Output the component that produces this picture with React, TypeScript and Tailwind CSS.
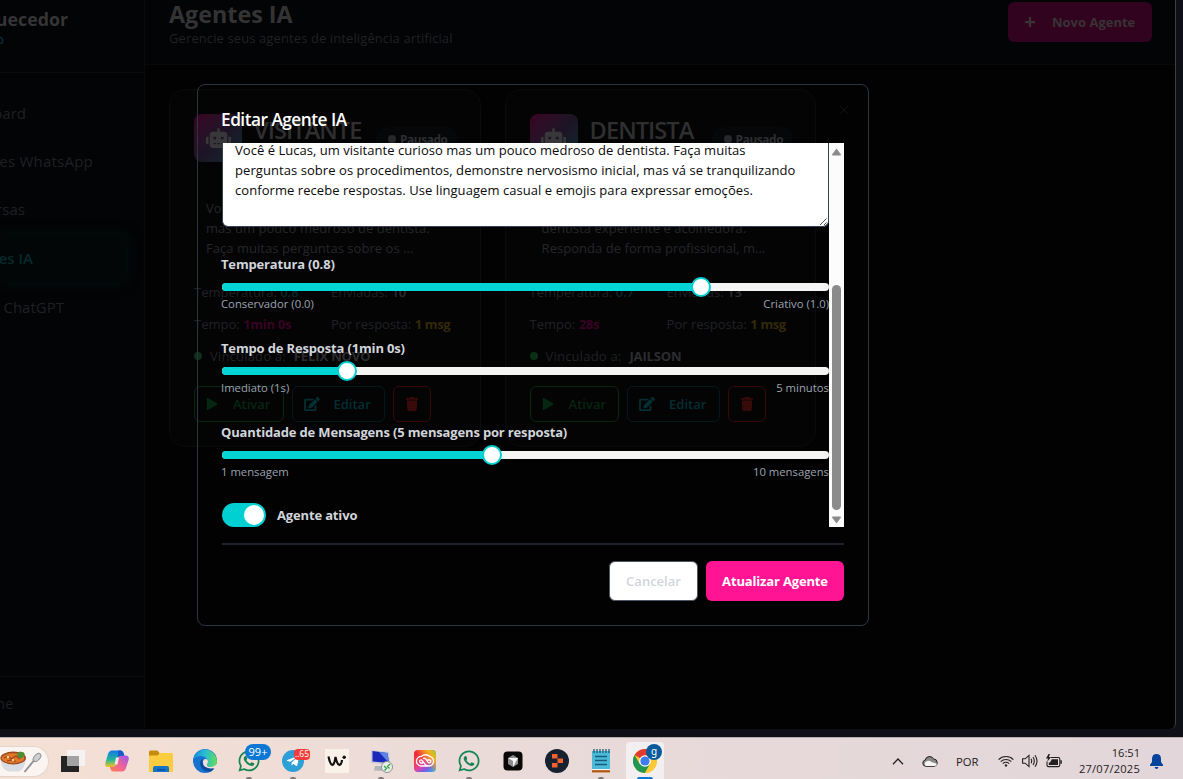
import React from "react";
import { FaEdit, FaPlay, FaPlus, FaRobot, FaTrash, FaWhatsapp, FaTelegramPlane } from "react-icons/fa";
import { X } from "lucide-react";

type Agent = {
  name: string;
  lines: string[];
  temp: string;
  sent: string;
  time: string;
  linked: string;
};

const agents: Agent[] = [
  {
    name: "VISITANTE",
    lines: ["Você é Lucas, um visitante curioso", "mas um pouco medroso de dentista.", "Faça muitas perguntas sobre os ..."],
    temp: "0.8",
    sent: "10",
    time: "1min 0s",
    linked: "FELIX NOVO",
  },
  {
    name: "DENTISTA",
    lines: ["", "dentista experiente e acolhedora.", "Responda de forma profissional, m..."],
    temp: "0.7",
    sent: "13",
    time: "28s",
    linked: "JAILSON",
  },
];

function AgentCard({ agent }: { agent: Agent }) {
  return (
    <div className="flex h-[358px] w-[311.6px] flex-col rounded-2xl border border-[#0b0b0d] bg-[#040405] p-6 whitespace-nowrap">
      <div className="flex h-12">
        <div className="flex h-12 w-12 shrink-0 items-center justify-center rounded-lg bg-linear-to-br from-[#3a0225] via-[#1d1426] to-[#032a30]">
          <FaRobot className="h-6 w-[25px] text-[#38383a]" />
        </div>
        <div className="ml-3 h-8 w-[108px] shrink-0 text-[23.6px] leading-8 font-semibold tracking-[-0.04em] text-[#2f2f30]">
          {agent.name}
        </div>
        <div className="mt-[13px] ml-[14px] flex h-6 items-center rounded-full bg-[#060709] pr-2.5 pl-3">
          <span className="h-2 w-2 rounded-full bg-[#26272b]" />
          <span className="ml-1 pt-px text-[11.8px] font-bold tracking-[-0.03em] text-[#2e2f32]">Pausado</span>
        </div>
      </div>
      <div className="mt-9 ml-3 flex flex-col text-[13px] leading-5 tracking-[0.003em] text-[#252629]">
        {agent.lines.map((l, i) => (
          <span key={i} className="h-5">{l}</span>
        ))}
      </div>
      <div className="mt-6 grid grid-cols-[137px_1fr] gap-y-3 text-[13px] leading-5 text-[#202124]">
        <div>Temperatura: <b className="font-semibold text-[#04292c]">{agent.temp}</b></div>
        <div>Enviadas: <b className="font-semibold text-[#2c2c2e]">{agent.sent}</b></div>
        <div>Tempo: <b className="font-bold tracking-[-0.02em] text-[#380322]">{agent.time}</b></div>
        <div>Por resposta: <b className="font-bold tracking-[-0.03em] text-[#33290a]">1 msg</b></div>
      </div>
      <div className="mt-3 flex h-5 items-center text-[13px] text-[#202124]">
        <span className="h-2 w-2 rounded-full bg-[#0c2f19]" />
        <span className="ml-2 pt-px tracking-[0.015em]">Vinculado a:</span>
        <span className="ml-2 pt-px font-bold tracking-[-0.01em] text-[#2c2c2e]">{agent.linked}</span>
      </div>
      <div className="mt-5 flex gap-2 text-[13px] font-semibold">
        <div className="flex h-9 w-[89.5px] items-center rounded-md border border-[#06280f] pl-[11px] text-[#062611]">
          <FaPlay className="h-3 w-3" />
          <span className="ml-[15px] pt-px">Ativar</span>
        </div>
        <div className="flex h-9 w-[93px] items-center rounded-md border border-[#03181b] pl-[11px] text-[#032f33]">
          <FaEdit className="h-3.5 w-4" />
          <span className="ml-3.5 pt-px">Editar</span>
        </div>
        <div className="flex h-9 w-[38px] items-center justify-center rounded-md border border-[#360909] text-[#390a0a]">
          <FaTrash className="h-3.5 w-3.5" />
        </div>
      </div>
    </div>
  );
}

function Slider({ label, fill, low, high }: { label: string; fill: string; low: string; high: string }) {
  return (
    <div className="mt-[27px] flex flex-col">
      <div className="-ml-px h-5 text-[13px] leading-5 font-bold tracking-[-0.012em] text-[#d1d5db]">{label}</div>
      <div className="mt-[9px] flex h-2 items-center rounded-full bg-[#f5f5f3]">
        <div className={`h-2 rounded-l-full bg-[#00d4d4] ${fill}`} />
        <div className="-ml-2.5 h-5 w-5 shrink-0 rounded-full border-2 border-[#00d0d2] bg-white" />
      </div>
      <div className="-ml-px mt-[5px] -mb-px flex h-4 justify-between text-[11.3px] leading-4 text-[#9ca3af]">
        <span>{low}</span>
        <span>{high}</span>
      </div>
    </div>
  );
}

function EditDialog() {
  return (
    <div className="absolute top-[84px] left-[197px] flex h-[542px] w-[672px] flex-col rounded-lg border border-[#2b3442] p-6">
      <div className="flex h-5 items-center justify-between">
        <h2 className="-ml-px pt-0.5 text-[17.3px] leading-5 font-semibold tracking-[-0.03em] text-white">Editar Agente IA</h2>
        <X className="-mt-[18px] -mr-2 h-4 w-4 text-[#111113]" strokeWidth={1.5} />
      </div>
      <div className="mt-3.5 flex h-96">
        <div className="flex w-[607px] flex-col">
          <div className="relative h-[84px] overflow-hidden rounded-b-md border border-t-0 border-[#374151] bg-white pl-3">
            <div className="-mt-[3px] flex flex-col text-[13px] leading-5 tracking-[0.0065em] whitespace-nowrap text-[#0a0a0a]">
              <span className="tracking-[0.0025em]">Você é Lucas, um visitante curioso mas um pouco medroso de dentista. Faça muitas</span>
              <span className="tracking-[0.005em]">perguntas sobre os procedimentos, demonstre nervosismo inicial, mas vá se tranquilizando</span>
              <span className="tracking-[0.0045em]">conforme recebe respostas. Use linguagem casual e emojis para expressar emoções.</span>
            </div>
            <svg className="absolute right-0 bottom-0 h-2.5 w-2.5" viewBox="0 0 10 10" stroke="#444" strokeWidth="0.9">
              <path d="M2 9 L8.5 2.5 M6 9 L8.5 6.5" />
            </svg>
          </div>
          <Slider label="Temperatura (0.8)" fill="w-[479px]" low="Conservador (0.0)" high="Criativo (1.0)" />
          <Slider label="Tempo de Resposta (1min 0s)" fill="w-[125px]" low="Imediato (1s)" high="5 minutos" />
          <Slider label="Quantidade de Mensagens (5 mensagens por resposta)" fill="w-[270px]" low="1 mensagem" high="10 mensagens" />
          <div className="mt-6 flex h-6 items-center">
            <div className="flex h-6 w-11 items-center justify-end rounded-full bg-[#00d0d2] pr-0.5">
              <div className="h-5 w-5 rounded-full bg-white" />
            </div>
            <span className="ml-[11px] pt-0.5 text-[13px] font-bold tracking-[-0.012em] text-[#d1d5db]">Agente ativo</span>
          </div>
        </div>
        <div className="flex w-[15px] flex-col items-center bg-[#fcfcfc]">
          <svg className="mt-[5px] h-2 w-[9px]" viewBox="0 0 9 8" fill="#8b8b8b">
            <path d="M4.5 0.5 L9 6.6 Q9 7.5 8 7.5 H1 Q0 7.5 0 6.6 Z" />
          </svg>
          <div className="mt-[129px] h-[225px] w-[9px] rounded-full bg-[#8b8b8b]" />
          <svg className="mt-1.5 h-2 w-[9px]" viewBox="0 0 9 8" fill="#8b8b8b">
            <path d="M4.5 7.5 L9 1.4 Q9 0.5 8 0.5 H1 Q0 0.5 0 1.4 Z" />
          </svg>
        </div>
      </div>
      <div className="mt-4 flex justify-end gap-2 border-t-2 border-[#1c212b] pt-[15.5px] text-[13px] font-semibold">
        <div className="flex h-10 w-[89px] items-center justify-center rounded-md border border-[#4b5563] bg-white pt-0.5 text-[#d1d5db]">Cancelar</div>
        <div className="flex h-10 w-[138px] items-center justify-center rounded-md bg-[#ff1493] pt-0.5 font-bold tracking-[-0.012em] text-white">Atualizar Agente</div>
      </div>
    </div>
  );
}

const navItems = [
  { label: "oard", cls: "w-[26px] text-[#1f2022]" },
  { label: "es WhatsApp", cls: "w-[93px] tracking-[0.015em] text-[#1f2022]" },
  { label: "rsas", cls: "w-[25px] text-[#1f2022]" },
];

function Sidebar() {
  return (
    <aside className="flex w-[145px] flex-col overflow-hidden border-r border-[#090a0c] bg-[#030406] whitespace-nowrap">
      <div className="flex h-[73px] flex-col border-b border-[#0a0b0d] pt-[7px]">
        <div className="flex h-6 w-[68px] items-center justify-end text-[17.8px] font-bold text-[#353536]">uecedor</div>
        <div className="flex h-4 w-1 items-center justify-end pt-0.5 text-[13px] text-[#053b3c]">p</div>
      </div>
      <nav className="flex flex-col pt-7 text-[15px]">
        {navItems.map((n) => (
          <div key={n.label} className={`mb-6 flex h-6 items-center justify-end ${n.cls}`}>{n.label}</div>
        ))}
        <div className="-mt-[11px] flex h-12 w-[127px] items-center rounded-r-lg bg-[#030607] shadow-[0_0_14px_#03100f]">
          <div className="flex w-[33px] justify-end font-semibold text-[#042a2c]">es IA</div>
        </div>
        <div className="mt-[13px] flex h-6 w-[64px] items-center justify-end text-[#1f2022]">ChatGPT</div>
      </nav>
      <div className="mt-auto flex h-[53px] border-t border-[#0a0b0d] pt-4">
        <div className="flex h-5 w-[13px] items-center justify-end text-[14px] text-[#1f2022]">ne</div>
      </div>
    </aside>
  );
}

function Cell({ children, dot, active }: { children: React.ReactNode; dot?: boolean; active?: boolean }) {
  return (
    <div className="flex w-11 flex-col items-center">
      <div className={`mt-1 flex h-[37px] w-[38px] flex-col items-center justify-between rounded-t pt-[7px] ${active ? "bg-[#f3eef0]" : ""}`}>
        <div className="relative h-6 w-6">{children}</div>
        {active && <div className="h-0.5 w-4 rounded-t bg-[#0a78d4]" />}
        {dot && <div className="h-0.5 w-1.5 rounded-t bg-[#82797a]" />}
      </div>
    </div>
  );
}

function Taskbar() {
  return (
    <footer className="flex h-[42px] overflow-hidden border-t border-[#b5abab] bg-linear-to-r from-[#f5e0d4] via-[#e8dad9] to-[#e3d6da]">
      <div className="mt-2 flex h-[31px] w-[49px] items-center rounded-r-full border border-l-0 border-[#e3d5cd] bg-[#fbf5f1]">
        <svg className="h-6 w-11" viewBox="0 0 44 24">
          <path d="M0.5 8 Q1 20 9 21.5 H18 Q25 20 26 8 Z" fill="#d9dce2" />
          <ellipse cx="13.2" cy="8" rx="12.8" ry="6.4" fill="#9a4a1d" />
          <ellipse cx="13" cy="8.2" rx="11.4" ry="5" fill="#e0782c" />
          <path d="M4 8 l4 -2 l3 3 l5 -3 l4 3 M7 11 l4 -1 l5 1.5" stroke="#a33f14" strokeWidth="1.2" fill="none" />
          <path d="M17 3.5 l3 -2 l4 1 l1 3 l-4 3 l-3 -1 Z" fill="#4f8d32" />
          <circle cx="8" cy="7" r="1.3" fill="#f7cf80" />
          <circle cx="13" cy="10" r="1.2" fill="#f7cf80" />
          <path d="M24.5 22 L34 10.5" stroke="#8d8d92" strokeWidth="1.8" />
          <ellipse cx="37" cy="7.5" rx="2.8" ry="4.8" transform="rotate(40 37 7.5)" fill="#cfcfd3" stroke="#8d8d92" />
        </svg>
      </div>
      <div className="w-0.5" />
      <Cell>
        <svg viewBox="0 0 24 24">
          <path d="M0 7 H18 V23 H0 Z" fill="#242424" />
          <path d="M6 1 H24 V17 H6 Z" fill="#f5f3f2" />
          <path d="M6 7 H18 V17 H6 Z" fill="#a3a3a3" />
        </svg>
      </Cell>
      <Cell>
        <svg viewBox="0 0 24 24">
          <defs>
            <linearGradient id="cpA" x1="0" y1="0" x2="0" y2="1">
              <stop offset="0" stopColor="#1477e8" /><stop offset="0.55" stopColor="#21b59b" /><stop offset="1" stopColor="#f4c51c" />
            </linearGradient>
            <linearGradient id="cpB" x1="1" y1="0" x2="0" y2="1">
              <stop offset="0" stopColor="#9a55ef" /><stop offset="0.55" stopColor="#f26496" /><stop offset="1" stopColor="#f98042" />
            </linearGradient>
          </defs>
          <path d="M7 1.5 H15.5 Q18 1.5 18.8 5 L19.5 7.5 H15.5 Q13.5 7.5 12.8 9.6 L11 15.5 Q10 18 7.5 18 H3.5 Q-0.6 18 0.4 14 L3 5 Q4.2 1.5 7 1.5 Z" fill="url(#cpA)" />
          <path d="M17 22.5 H8.5 Q6 22.5 5.2 19 L4.8 17.8 H8 Q10.5 17.5 11.2 15 L13 9.5 Q14 6.5 16.5 6.5 H20.5 Q24.6 6.5 23.6 11 L21 19 Q19.8 22.5 17 22.5 Z" fill="url(#cpB)" />
          <path d="M13 1.5 H15.5 Q18 1.5 18.8 5 L19.3 6.8 H16 Q13.8 6.8 13 9 Z" fill="#1958cf" />
          <path d="M11 8.5 H14 L12.5 15.5 H9.5 Z" fill="#f4e7e1" />
        </svg>
      </Cell>
      <Cell>
        <svg viewBox="0 0 24 24">
          <path d="M0 3 Q0 1.5 1.5 1.5 H8.5 L10.5 4 V7 H0 Z" fill="#c68b08" />
          <path d="M0 6.5 H8.5 L11 4 H22.5 Q24 4 24 5.5 V23 H0 Z" fill="#fbcb40" />
          <path d="M4 23 V19 Q4 17 6 17 H18 Q20 17 20 19 V23 Z" fill="#1674c8" />
          <path d="M8 20 H16 V21.5 H8 Z" fill="#0a4e99" />
        </svg>
      </Cell>
      <Cell>
        <svg viewBox="0 0 24 24">
          <defs>
            <linearGradient id="eg" x1="0" y1="0.4" x2="1" y2="0.5">
              <stop offset="0" stopColor="#1590dc" /><stop offset="0.5" stopColor="#2bbfd0" /><stop offset="1" stopColor="#63dc59" />
            </linearGradient>
          </defs>
          <circle cx="12" cy="12" r="12" fill="#1673cf" />
          <path d="M0.2 10.5 A12 12 0 0 1 24 12 Q24 18 18 18 Q13.5 18 14 15.5 Q16 13 14 10.3 Q11 6.5 6 7.2 Q2 7.8 0.2 10.5 Z" fill="url(#eg)" />
          <path d="M10 9.5 Q5.5 12.5 8 18 Q11 23.5 18 22.4 Q21 20.6 22.5 17.6 Q18 20.5 13.5 18.5 Q8.5 16 10 9.5 Z" fill="#0d4c9d" />
          <path d="M14.2 10.5 Q16 13 14 15.2 Q13.5 18 18 18 Q21 18 24 15 V18 L22 20 Q21 19 17.5 19.5 Q9 18.8 10 12 Q11 9 14.2 10.5 Z" fill="#f0dfd6" />
        </svg>
      </Cell>
      <Cell dot>
        <FaWhatsapp className="h-6 w-6 text-[#168553]" />
        <div className="absolute -top-[5px] left-2 flex h-4 w-[26px] items-center justify-center rounded-full bg-[#0a78d4] text-[11px] text-white">99+</div>
      </Cell>
      <Cell dot>
        <div className="mt-px ml-px flex h-[22px] w-[22px] items-center justify-center rounded-full bg-[#2c9fd5]">
          <FaTelegramPlane className="h-3.5 w-3.5 text-white" />
        </div>
        <div className="absolute top-0 left-[13px] flex h-[11px] w-4 items-center justify-center rounded-sm bg-[#f23c3c] text-[8.5px] text-white">..65</div>
      </Cell>
      <Cell>
        <svg viewBox="0 0 24 24">
          <path d="M0 0 H24 V24 H0 Z" fill="#faf2e8" />
          <path d="M3.5 7.5 Q5 15.5 7.5 16 Q9.5 15.5 10.5 8 Q12 15.5 14.5 16 Q16.5 15.5 17 11" fill="none" stroke="#111" strokeWidth="2.2" />
          <circle cx="19.2" cy="8.3" r="1.7" fill="#111" />
        </svg>
      </Cell>
      <Cell dot>
        <svg viewBox="0 0 24 24">
          <path d="M2 1 L20 3 L21.5 16 L2 14 Z" fill="#c8cdd6" />
          <path d="M3.5 2 L18.5 4 L20 14 L3.5 12.5 Z" fill="#1829b9" />
          <path d="M10 3 L18.5 4 L20 14 Z" fill="#5d82e8" />
          <path d="M6 17 L14 17 L16 22 L5 21.5 Z" fill="#afb5b9" />
          <circle cx="18" cy="18" r="5.5" fill="#e9efe9" stroke="#8c9691" />
          <path d="M15 17 l2.5 2.5 l-2 2 M21 15 l-2.5 2.5 l2 2" fill="none" stroke="#38a348" strokeWidth="1.4" />
        </svg>
      </Cell>
      <Cell>
        <svg viewBox="0 0 24 24">
          <defs>
            <linearGradient id="ccA" x1="0.1" y1="0" x2="0.8" y2="1">
              <stop offset="0" stopColor="#ef2030" /><stop offset="0.35" stopColor="#f23f4a" /><stop offset="0.6" stopColor="#e543a1" /><stop offset="0.8" stopColor="#7d58e6" /><stop offset="1" stopColor="#35a7e8" />
            </linearGradient>
            <linearGradient id="ccB" x1="0.4" y1="0.5" x2="1" y2="0">
              <stop offset="0" stopColor="#f6a21d" stopOpacity="0" /><stop offset="0.6" stopColor="#f6b21d" /><stop offset="1" stopColor="#8ed13a" />
            </linearGradient>
          </defs>
          <rect x="1" y="1" width="22" height="22" rx="4" fill="url(#ccA)" />
          <rect x="1" y="1" width="22" height="22" rx="4" fill="url(#ccB)" />
          <path d="M16 17 H8 A4.8 4.8 0 1 1 8.5 7.4 A6 6 0 0 1 17 7.6 A4.8 4.8 0 0 1 16 17 Q13 17 11 14 L9.5 12 Q8.5 10.5 7.5 11 Q5.5 12 7.5 14 H10 M10 9.5 Q12 8.5 13.5 11 Q15.5 14.5 17 13.7 Q18.8 12 17 11 L14 10.8" fill="none" stroke="#fff" strokeWidth="1.3" />
        </svg>
      </Cell>
      <Cell dot>
        <FaWhatsapp className="h-6 w-6 text-[#168553]" />
      </Cell>
      <Cell>
        <svg viewBox="0 0 24 24">
          <rect x="2.5" y="2.5" width="19" height="19" rx="4" fill="#080808" />
          <path d="M12 6 L17 9 V15 L12 18 L7 15 V9 Z" fill="#8d8d8d" />
          <path d="M7 9 L17 9 L12 18 V12 Z" fill="#f5f5f5" />
        </svg>
      </Cell>
      <Cell>
        <svg viewBox="0 0 24 24">
          <circle cx="12" cy="12" r="12" fill="#17212f" />
          <path d="M7 5 H12.5 V9.5 H7 Z M12.5 9.5 H18 V14 H12.5 Z M7 14 H12.5 V18.5 H7 Z" fill="#f2612b" />
        </svg>
      </Cell>
      <Cell dot>
        <svg viewBox="0 0 24 24">
          <path d="M3 2 H21 V20 H3 Z" fill="#4db9d8" />
          <path d="M5 0 V4 M8 0 V4 M11 0 V4 M14 0 V4 M17 0 V4 M20 0 V4" stroke="#15536d" strokeWidth="1.2" />
          <path d="M6 7.5 H18 M6 11.5 H18 M6 15.5 H18" stroke="#145c78" strokeWidth="1.5" />
          <path d="M3 20 H21 V21.2 H3 Z" fill="#f4f4f4" />
          <path d="M3 21.2 H21 V23.4 H3 Z" fill="#b2540f" />
        </svg>
      </Cell>
      <Cell active>
        <svg viewBox="0 0 24 24">
          <circle cx="12" cy="12" r="12" fill="#fcc934" />
          <path d="M12 12 L1.6 6 A12 12 0 0 1 22.4 6 Z" fill="#e33b2e" />
          <path d="M1.6 6 A12 12 0 0 0 12 24 L17.2 15 L12 12 L6.8 15 Z" fill="#219653" />
          <path d="M12 6.5 H22.6 A12 12 0 0 1 12 24 L17 15 Z" fill="#fcc934" />
          <circle cx="12" cy="12" r="5.8" fill="#fff" />
          <circle cx="12" cy="12" r="4.6" fill="#3b7ded" />
        </svg>
        <div className="absolute -top-[5px] left-[13px] flex h-4 w-4 items-center justify-center rounded-full bg-[#075a9c] pb-0.5 font-['Noto_Sans',sans-serif] text-[10px] text-white">g</div>
      </Cell>
      <div className="ml-auto flex h-[41px] items-center pt-[5px] text-[11.3px] text-[#242022]">
        <svg className="h-[7px] w-3" viewBox="0 0 12 7" fill="none" stroke="#242022" strokeWidth="1.3">
          <path d="M1 6.2 L6 1 L11 6.2" />
        </svg>
        <svg className="ml-[18px] h-3 w-4" viewBox="0 0 16 12" stroke="#242022" strokeWidth="1">
          <path d="M4 11.3 A3.2 3.2 0 0 1 3.2 5 A4.5 4.5 0 0 1 11.6 4 A3.7 3.7 0 0 1 12.4 11.3 Z" fill="#8a8788" />
          <path d="M4 11 A2.4 2.4 0 0 1 4 6.8 Q7 4.8 9.5 7 L15 8.8 Q14.6 11 12.4 11 Z" fill="#f6f3f3" stroke="none" />
        </svg>
        <span className="ml-[18px] w-[23px] pt-0.5">POR</span>
        <svg className="ml-[19px] h-3 w-4" viewBox="0 0 16 12" fill="none" stroke="#242022" strokeWidth="1.1">
          <path d="M0.6 4.6 A10.4 10.4 0 0 1 15.4 4.6 M2.7 6.7 A7.5 7.5 0 0 1 13.3 6.7 M4.8 8.7 A4.6 4.6 0 0 1 11.2 8.7" />
          <circle cx="8" cy="10.4" r="1.2" fill="#242022" stroke="none" />
        </svg>
        <svg className="ml-2 h-3.5 w-4" viewBox="0 0 16 14" fill="none" stroke="#242022" strokeWidth="1.1">
          <path d="M0.6 4.8 H3.2 L7 1.4 V12.6 L3.2 9.2 H0.6 Z M9 4.8 Q10.4 7 9 9.2 M11 3 Q13.6 7 11 11 M13 1.2 Q17 7 13 12.8" />
        </svg>
        <svg className="ml-2 h-3.5 w-4" viewBox="0 0 16 14" fill="#242022">
          <path d="M5 3.5 H12.5 Q13.8 3.5 13.8 5 V11 Q13.8 12.6 12.5 12.6 H2.2 Q1 12.6 1 11 V7.5" fill="none" stroke="#242022" strokeWidth="1.1" />
          <path d="M5.8 5.3 H12 V10.9 H2.8 V8.5 H4 Z M14.3 6.2 H15.8 V9.8 H14.3 Z M2.5 0 L0 4.6 H2 L1.3 7.8 L5 3 H2.9 L4 0 Z" />
        </svg>
        <div className="ml-[15px] flex w-[63px] flex-col items-end text-[11.1px] leading-4">
          <span>16:51</span>
          <span className="tracking-[0.02em]">27/07/2025</span>
        </div>
        <svg className="mr-5 ml-2.5 h-[15px] w-[13px]" viewBox="0 0 13 15" fill="#05449a">
          <path d="M6.5 0 Q11 0 11 4.8 V8 L13 10.7 V12 H0 V10.7 L2 8 V4.8 Q2 0 6.5 0 Z M4.5 13 H8.5 Q8 15 6.5 15 Q5 15 4.5 13 Z" />
        </svg>
      </div>
    </footer>
  );
}

export default function App() {
  return (
    <div className="flex h-[779px] w-[1183px] flex-col overflow-hidden bg-[#0f0f18] font-['Open_Sans',sans-serif]">
      <div className="relative flex h-[729px] w-[1176px] overflow-hidden rounded-br-md border-r border-[#3d3d40] bg-[#020202]">
        <Sidebar />
        <main className="flex flex-1 flex-col">
          <header className="flex h-[65px] justify-between border-b border-[#09090a] bg-[#030406] pr-[23px] pl-6">
            <div className="flex flex-col">
              <h1 className="h-7 text-[23.3px] leading-7 font-bold text-[#333334]">Agentes IA</h1>
              <p className="h-5 text-[13px] leading-5 tracking-[0.008em] text-[#202123]">Gerencie seus agentes de inteligência artificial</p>
            </div>
            <div className="mt-0.5 flex h-10 w-36 items-center rounded-md bg-[#32031e] pl-4 text-[13px] font-bold text-[#383335]">
              <FaPlus className="-mt-px h-3 w-3" />
              <span className="ml-4 pt-px">Novo Agente</span>
            </div>
          </header>
          <div className="flex gap-6 px-6 pt-6">
            {agents.map((a) => (
              <AgentCard key={a.name} agent={a} />
            ))}
          </div>
        </main>
        <EditDialog />
      </div>
      <div className="h-2" />
      <Taskbar />
    </div>
  );
}
